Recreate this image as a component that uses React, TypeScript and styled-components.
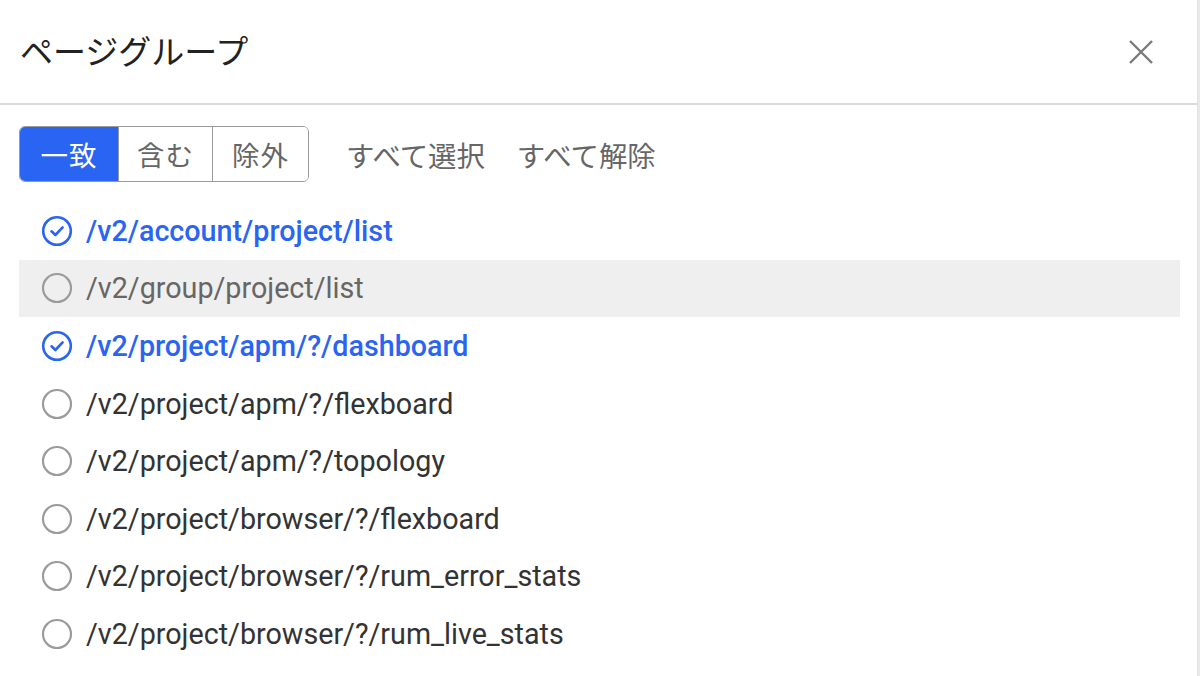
import React, { useState } from "react";
import styled, { createGlobalStyle } from "styled-components";

const Global = createGlobalStyle`
  html, body { margin: 0; padding: 0; background: #e9e9e9; }
  body { font-family: Roboto, "Noto Sans CJK JP", sans-serif; }
`;

const BLUE = "#2a64f3";
const JP = `"Noto Sans CJK JP", "Noto Sans", sans-serif`;

const Dialog = styled.div`
  width: 1197px;
  height: 676px;
  background: #fff;
  border-right: 1px solid #e2e2e2;
  display: flex;
  flex-direction: column;
  overflow: hidden;
`;

const Header = styled.header`
  height: 103px;
  flex: none;
  display: flex;
  align-items: center;
  justify-content: space-between;
  padding: 0 42px 0 20px;
  border-bottom: 2px solid #dadada;
`;

const Title = styled.h1`
  margin: 0 0 4px 0;
  font-family: ${JP};
  font-weight: 400;
  font-size: 33px;
  color: #222;
  letter-spacing: 0;
`;

const CloseButton = styled.button`
  border: 0;
  background: none;
  padding: 0;
  width: 28px;
  height: 28px;
  display: flex;
  align-items: center;
  justify-content: center;
  cursor: pointer;
`;

const Body = styled.div`
  padding: 21px 19px 0 19px;
  display: flex;
  flex-direction: column;
  gap: 20px;
`;

const Toolbar = styled.div`
  display: flex;
  align-items: center;
  gap: 37px;
`;

const Segment = styled.div`
  display: flex;
  height: 56px;
  border-radius: 6px;
  overflow: hidden;
  border: 1.5px solid #9a9a9a;
  box-sizing: border-box;
`;

const SegButton = styled.button<{ $active?: boolean; $w: number; $first?: boolean }>`
  width: ${(p) => p.$w}px;
  height: 100%;
  border: 0;
  border-left: ${(p) => (p.$first ? "0" : "1.5px solid #9a9a9a")};
  background: ${(p) => (p.$active ? BLUE : "#fff")};
  color: ${(p) => (p.$active ? "#fff" : "#666")};
  font-family: ${JP};
  font-size: 27.5px;
  padding: 0;
  letter-spacing: 1px;
  cursor: pointer;
`;

const Links = styled.div`
  display: flex;
  gap: 32px;
`;

const LinkButton = styled.button`
  border: 0;
  background: none;
  padding: 0;
  font-family: ${JP};
  font-size: 28.4px;
  color: #666;
  cursor: pointer;
`;

const List = styled.ul`
  list-style: none;
  margin: 0;
  padding: 0;
  width: 1161px;
`;

const Row = styled.li<{ $hover?: boolean }>`
  height: 57.6px;
  display: flex;
  align-items: center;
  gap: 13px;
  padding-left: 22px;
  background: ${(p) => (p.$hover ? "#efefef" : "transparent")};
`;

const Label = styled.span<{ $selected?: boolean; $hover?: boolean }>`
  font-family: Roboto, sans-serif;
  font-size: 28.7px;
  font-weight: ${(p) => (p.$selected ? 500 : 400)};
  color: ${(p) => (p.$selected ? BLUE : p.$hover ? "#666" : "#333")};
`;

const Radio = ({ checked }: { checked: boolean }) =>
  checked ? (
    <svg width="32" height="32" viewBox="0 0 32 32">
      <circle cx="16" cy="16" r="13.8" fill="none" stroke={BLUE} strokeWidth="2.6" />
      <path d="M10.5 16.3 L14.4 20 L21.6 12.4" fill="none" stroke={BLUE} strokeWidth="2.6" strokeLinecap="round" strokeLinejoin="round" />
    </svg>
  ) : (
    <svg width="32" height="32" viewBox="0 0 32 32">
      <circle cx="16" cy="16" r="14" fill="none" stroke="#9b9b9b" strokeWidth="2.2" />
    </svg>
  );

const items = [
  { path: "/v2/account/project/list", selected: true },
  { path: "/v2/group/project/list", selected: false, hover: true },
  { path: "/v2/project/apm/?/dashboard", selected: true },
  { path: "/v2/project/apm/?/flexboard", selected: false },
  { path: "/v2/project/apm/?/topology", selected: false },
  { path: "/v2/project/browser/?/flexboard", selected: false },
  { path: "/v2/project/browser/?/rum_error_stats", selected: false },
  { path: "/v2/project/browser/?/rum_live_stats", selected: false },
];

export default function App() {
  const [mode, setMode] = useState(0);
  const modes = [
    { label: "一致", w: 98 },
    { label: "含む", w: 94 },
    { label: "除外", w: 96 },
  ];
  return (
    <>
      <Global />
      <Dialog>
        <Header>
          <Title>ページグループ</Title>
          <CloseButton aria-label="close">
            <svg width="26" height="26" viewBox="0 0 26 26">
              <path d="M2 2 L24 24 M24 2 L2 24" stroke="#7a7a7a" strokeWidth="2.4" strokeLinecap="butt" />
            </svg>
          </CloseButton>
        </Header>
        <Body>
          <Toolbar>
            <Segment>
              {modes.map((m, i) => (
                <SegButton key={m.label} $w={m.w} $first={i === 0} $active={mode === i} onClick={() => setMode(i)}>
                  {m.label}
                </SegButton>
              ))}
            </Segment>
            <Links>
              <LinkButton>すべて選択</LinkButton>
              <LinkButton>すべて解除</LinkButton>
            </Links>
          </Toolbar>
          <List>
            {items.map((it) => (
              <Row key={it.path} $hover={it.hover}>
                <Radio checked={it.selected} />
                <Label $selected={it.selected} $hover={it.hover}>
                  {it.path}
                </Label>
              </Row>
            ))}
          </List>
        </Body>
      </Dialog>
    </>
  );
}
